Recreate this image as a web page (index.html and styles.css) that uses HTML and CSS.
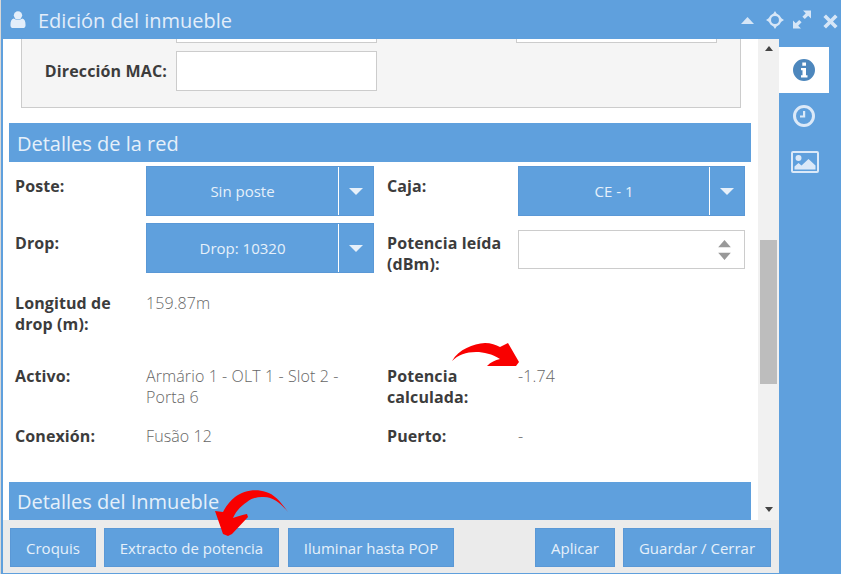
FILE: index.html
```html
<!DOCTYPE html>
<html lang="es">
<head>
<meta charset="utf-8">
<title>Edición del inmueble</title>
<link rel="stylesheet" href="styles.css">
</head>
<body>
<div class="window">
  <header class="titlebar">
    <svg class="user-icon" viewBox="0 0 16 18"><circle cx="8" cy="4.600" r="4.400"/><path d="M0 15c0-4 1-6.500 3.500-7 1.200 1 2.800 1.500 4.500 1.500S11.300 9 12.500 8C15 8.500 16 11 16 15c0 2-1.300 3-3 3H3c-1.700 0-3-1-3-3z"/></svg>
    <h1 class="title">Edición del inmueble</h1>
    <div class="win-tools">
      <svg class="tool t-up" viewBox="0 0 13 7"><path d="M6.500 0L13 7H0z"/></svg>
      <svg class="tool t-move" viewBox="0 0 18 18"><circle class="ring" cx="9" cy="9" r="5.200"/><path d="M9 0l2.200 3.500H6.800zM9 18l-2.200-3.500h4.400zM0 9l3.500-2.200v4.400zM18 9l-3.500 2.200V6.800z"/></svg>
      <svg class="tool t-exp" viewBox="0 0 18 18"><path d="M10 0h8v8l-2.800-2.800-3.400 3.400-2.400-2.400 3.400-3.400zM8 18H0v-8l2.800 2.800 3.400-3.400 2.400 2.400-3.400 3.400z"/></svg>
      <svg class="tool t-close" viewBox="0 0 15 15"><path d="M3 .4L7.500 5 12 .4 14.600 3 10 7.500 14.600 12 12 14.600 7.500 10 3 14.600.4 12 5 7.500.4 3z"/></svg>
    </div>
  </header>

  <div class="main">
    <div class="left">
      <div class="scrollarea">
        <div class="content">
          <section class="fieldset">
            <div class="fs-row fs-top">
              <span class="input fs-input"></span>
              <span class="input fs-input fs-input-right"></span>
            </div>
            <div class="fs-row">
              <label class="fs-label">Dirección MAC:</label>
              <span class="input fs-input"></span>
            </div>
          </section>

          <h2 class="section">Detalles de la red</h2>

          <div class="row r1">
            <div class="label">Poste:</div>
            <div class="select"><span class="sel-text">Sin poste</span><span class="sel-btn"><i class="caret"></i></span></div>
            <div class="label l2">Caja:</div>
            <div class="select"><span class="sel-text">CE - 1</span><span class="sel-btn"><i class="caret"></i></span></div>
          </div>
          <div class="row r2">
            <div class="label">Drop:</div>
            <div class="select"><span class="sel-text">Drop: 10320</span><span class="sel-btn"><i class="caret"></i></span></div>
            <div class="label l2">Potencia leída (dBm):</div>
            <div class="input num-input">
              <svg class="spin" viewBox="0 0 12 19"><path d="M6 0l6 7H0zM6 19l-6-7h12z"/></svg>
            </div>
          </div>
          <div class="row r3">
            <div class="label">Longitud de drop (m):</div>
            <div class="value">159.87m</div>
          </div>
          <div class="row r4">
            <div class="label">Activo:</div>
            <div class="value">Armário 1 - OLT 1 - Slot 2 - Porta 6</div>
            <div class="label l2">Potencia calculada:</div>
            <div class="value">-1.74</div>
          </div>
          <div class="row r5">
            <div class="label">Conexión:</div>
            <div class="value">Fusão 12</div>
            <div class="label l2">Puerto:</div>
            <div class="value">-</div>
          </div>

          <h2 class="section section-2">Detalles del Inmueble</h2>
        </div>
        <div class="scrollbar">
          <i class="sb-up"></i>
          <div class="sb-thumb"></div>
          <i class="sb-down"></i>
        </div>
      </div>
      <footer class="footer">
        <button class="btn b-croquis">Croquis</button>
        <button class="btn b-extracto">Extracto de potencia</button>
        <button class="btn b-iluminar">Iluminar hasta POP</button>
        <button class="btn b-aplicar">Aplicar</button>
        <button class="btn b-guardar">Guardar / Cerrar</button>
      </footer>
    </div>

    <nav class="sidebar">
      <div class="tab active">
        <svg class="tab-icon" viewBox="0 0 22 22"><path fill-rule="evenodd" d="M11 0a11 11 0 1 1 0 22 11 11 0 0 1 0-22zM9.300 3.500v3.300h3.700V3.500zM8 9v2.300h1.500v5H8v2.200h6.500v-2.200H13V9z"/></svg>
      </div>
      <div class="tab">
        <svg class="tab-icon clock" viewBox="0 0 22 22"><path fill-rule="evenodd" d="M11 0a11 11 0 1 1 0 22 11 11 0 0 1 0-22zm0 3a8 8 0 1 0 0 16 8 8 0 0 0 0-16zM10 6h2.200v6.500H7v-2h3z"/></svg>
      </div>
      <div class="tab">
        <svg class="tab-icon pic" viewBox="0 0 28 22"><path fill-rule="evenodd" d="M2 0h24a2 2 0 0 1 2 2v18a2 2 0 0 1-2 2H2a2 2 0 0 1-2-2V2a2 2 0 0 1 2-2zm0 2v18h24V2zM7.500 4a3 3 0 1 1 0 6 3 3 0 0 1 0-6zM3.500 18.500v-3l4-3.500 3 2.500 7-6.500 7 6.500v4z"/></svg>
      </div>
    </nav>
  </div>

  <svg class="arrows" viewBox="0 0 841 574">
    <path d="M452 361C459 349 473 344 485 343C491 343 496 345 500 347L508 343L519 362L516 366L487 366C491 362 495 360 500 359C492 354 484 352 476 352C466 352 458 355 452 361Z"/>
    <path d="M288 512C281 502 274 494 266 492C255 488 243 491 235 497C230 501 226 506 223 512L215 511L223 534L228 536L232 534L248 517L247 514C242 515 238 516 233 518C236 511 241 506 247 502C252 498 257 497 262 497C272 496 281 503 288 512Z"/>
  </svg>
</div>
</body>
</html>
```

FILE: styles.css
```css
* { box-sizing: border-box; }
html, body { margin: 0; padding: 0; }
body {
  width: 841px;
  height: 574px;
  overflow: hidden;
  background: #d8d8d8;
  font-family: "Open Sans", "Liberation Sans", sans-serif;
  font-size: 16px;
  color: #3c3c3c;
}
.window {
  position: relative;
  width: 840px;
  margin-left: 1px;
  height: 574px;
  background: #5fa0dd;
  display: flex;
  flex-direction: column;
}
.titlebar {
  height: 39px;
  flex: none;
  display: flex;
  align-items: center;
  padding-left: 9px;
  color: #e3eefa;
}
.user-icon { width: 16px; height: 17px; fill: #e3eefa; margin-right: 12px; }
.title { margin: 0; font-size: 20px; font-weight: 400; line-height: 39px; margin-top: 2px; }
.win-tools { margin-left: auto; display: flex; align-items: center; height: 39px; }
.tool { fill: #d6e6f7; display: block; }
.t-up { width: 13px; height: 7px; margin-right: 12px; margin-top: 1px; }
.t-move { width: 18px; height: 18px; margin-right: 9px; }
.ring { fill: none; stroke: #d6e6f7; stroke-width: 2.500px; }
.t-exp { width: 18px; height: 19px; margin-right: 12px; }
.t-close { width: 15px; height: 15px; margin-right: 3px; margin-top: 3px; }

.main { flex: 1; min-height: 0; display: flex; padding-left: 2px; }
.left { width: 776px; flex: none; display: flex; flex-direction: column; }
.scrollarea { flex: 1; min-height: 0; display: flex; background: #fff; overflow: hidden; }
.content { flex: 1; min-width: 0; padding: 0 7px 0 6px; overflow: hidden; }

.fieldset {
  margin: -20px 10px 0 12px;
  height: 89px;
  background: #f5f5f5;
  border: 1px solid #ccc;
  padding: 0;
}
.fs-row { display: flex; align-items: center; position: relative; height: 40px; margin-bottom: 8px; }
.fs-top { margin-top: -17px; }
.input { display: block; background: #fff; border: 1px solid #ccc; }
.fs-input { width: 201px; height: 40px; margin-left: 154px; }
.fs-input-right { margin-left: 139px; }
.fs-label {
  width: 154px;
  margin-right: -154px;
  text-align: right;
  padding-right: 9px;
  font-weight: 700;
  flex: none;
  position: relative;
  z-index: 1;
  white-space: nowrap;
  letter-spacing: .14px;
}

.section {
  margin: 15px 0 4px;
  height: 39px;
  line-height: 42px;
  padding-left: 8px;
  background: #5fa0dd;
  color: #e6f0fa;
  font-size: 20px;
  font-weight: 400;
}
.section-2 { margin: 0; line-height: 40px; }

.row { display: grid; grid-template-columns: 131px 228px 144px 227px; padding-left: 6px; line-height: 21px; }
.row .l2 { margin-left: 13px; }
.label { font-weight: 700; padding-top: 10px; padding-right: 8px; letter-spacing: .1px; }
.value { color: #666; font-weight: 300; padding-top: 10px; padding-right: 20px; letter-spacing: .1px; }
.r1 { height: 50px; margin-bottom: 7px; }
.r2 { height: 50px; margin-bottom: 10px; }
.r3 { height: 73px; }
.r4 { height: 60px; }
.r5 { height: 66px; }

.select {
  height: 50px;
  display: flex;
  background: #5fa0dd;
  border: 1px solid #5a98d6;
  color: #e6f0fa;
  font-size: 15px;
}
.sel-text { flex: 1; text-align: center; line-height: 48px; }
.sel-btn { width: 35px; flex: none; border-left: 1px solid #fff; display: flex; align-items: center; justify-content: center; }
.caret { width: 0; height: 0; border-left: 7px solid transparent; border-right: 7px solid transparent; border-top: 7px solid #e6f0fa; }
.num-input { height: 39px; margin-top: 7px; display: flex; align-items: center; justify-content: flex-end; padding-right: 13px; }
.spin { width: 13px; height: 20px; fill: #999; display: block; }

.scrollbar {
  width: 21px;
  flex: none;
  background: #f1f1f1;
  display: flex;
  flex-direction: column;
  align-items: center;
  padding: 7px 0 8px;
}
.sb-up { width: 0; height: 0; border-left: 4.500px solid transparent; border-right: 4.500px solid transparent; border-bottom: 5px solid #444; }
.sb-thumb { width: 17px; height: 144px; background: #bdbdbd; margin-top: 189px; }
.sb-down { width: 0; height: 0; border-left: 4.500px solid transparent; border-right: 4.500px solid transparent; border-top: 5px solid #444; margin-top: auto; }

.footer {
  height: 53px;
  margin-bottom: 1px;
  flex: none;
  background: #ebebeb;
  display: flex;
  padding: 8px 8px 0 7px;
}
.btn {
  height: 39px;
  background: #5fa0dd;
  border: 1px solid #5a98d6;
  color: #e6f0fa;
  font: 400 15px "Open Sans", "Liberation Sans", sans-serif;
  padding: 0;
}
.b-croquis { width: 86px; margin-right: 8px; }
.b-extracto { width: 175px; margin-right: 9px; }
.b-iluminar { width: 166px; }
.b-aplicar { width: 80px; margin-left: auto; margin-right: 8px; }
.b-guardar { width: 148px; }

.sidebar { flex: 1; display: flex; flex-direction: column; padding-top: 8px; padding-right: 12px; }
.tab { height: 46px; display: flex; align-items: center; justify-content: center; width: 50px; }
.tab.active { background: #fff; }
.tab-icon { width: 22px; height: 22px; fill: #dbe9f8; }
.tab.active .tab-icon { fill: #4d87bd; }
.pic { width: 28px; height: 22px; margin-left: 2px; }

.arrows { position: absolute; left: -1px; top: 0; width: 841px; height: 574px; pointer-events: none; fill: #f90000; }
```
